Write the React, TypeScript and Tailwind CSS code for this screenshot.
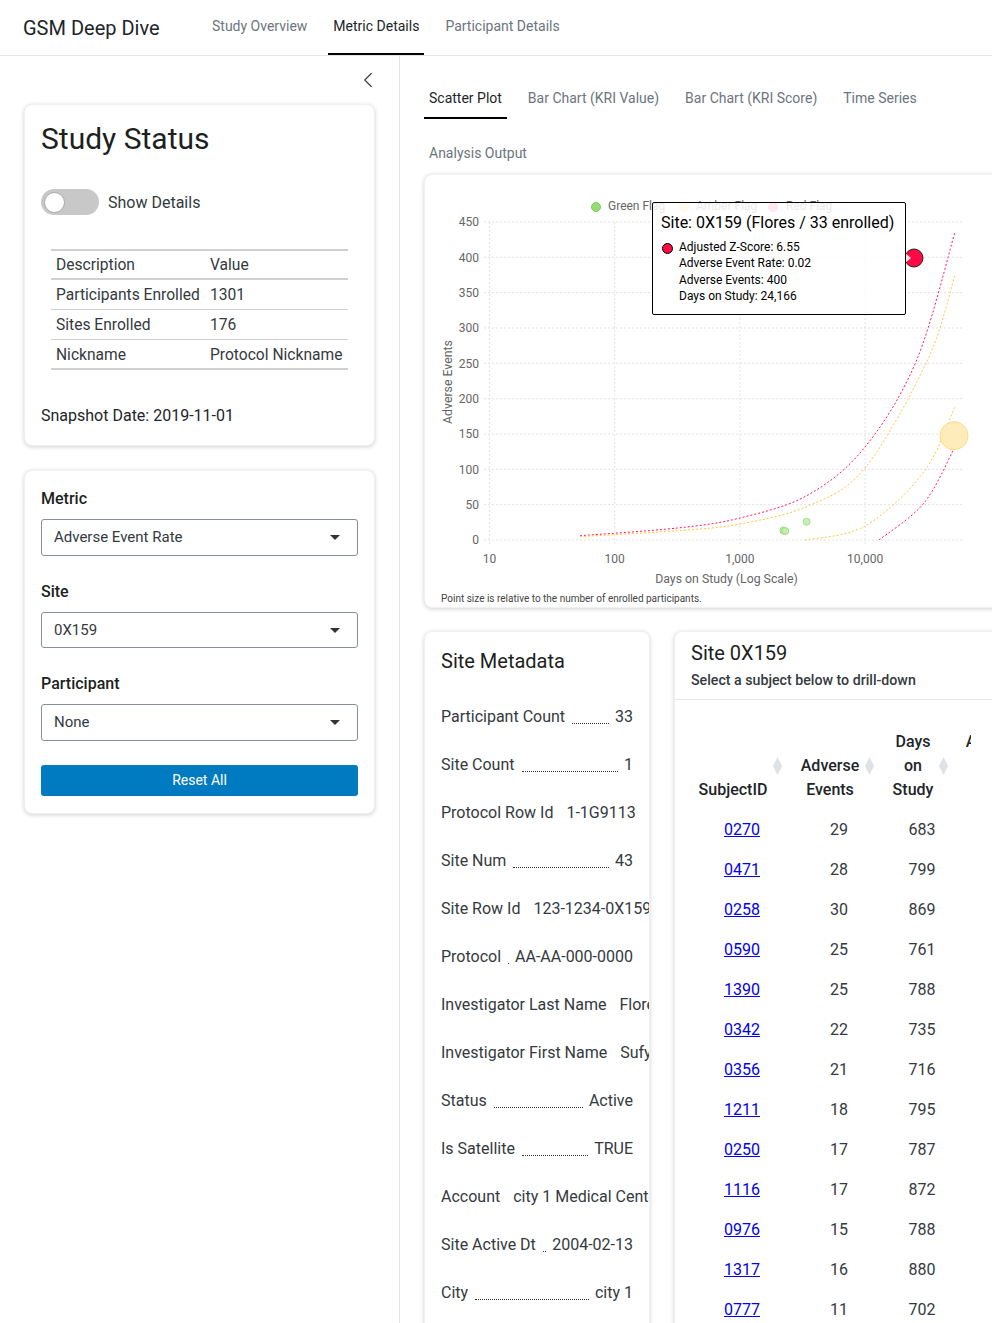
import { ChevronLeft } from "lucide-react";

const studyRows = [
  ["Participants Enrolled", "1301"],
  ["Sites Enrolled", "176"],
  ["Nickname", "Protocol Nickname"],
];

const metadata = [
  ["Participant Count", "33"],
  ["Site Count", "1"],
  ["Protocol Row Id", "1-1G9113"],
  ["Site Num", "43"],
  ["Site Row Id", "123-1234-0X159"],
  ["Protocol", "AA-AA-000-0000"],
  ["Investigator Last Name", "Flores"],
  ["Investigator First Name", "Sufyan"],
  ["Status", "Active"],
  ["Is Satellite", "TRUE"],
  ["Account", "city 1 Medical Center"],
  ["Site Active Dt", "2004-02-13"],
  ["City", "city 1"],
];

const subjects = [
  ["0270", "29", "683"],
  ["0471", "28", "799"],
  ["0258", "30", "869"],
  ["0590", "25", "761"],
  ["1390", "25", "788"],
  ["0342", "22", "735"],
  ["0356", "21", "716"],
  ["1211", "18", "795"],
  ["0250", "17", "787"],
  ["1116", "17", "872"],
  ["0976", "15", "788"],
  ["1317", "16", "880"],
  ["0777", "11", "702"],
];

const columns = [
  ["SubjectID", "right-[8.5px]", "pr-[18px]"],
  ["Adverse Events", "right-[14.5px]", "pr-[18px]"],
  ["Days on Study", "right-[8.5px]", "pr-[18px]"],
  ["Adverse Event Rate", "right-[8.5px]", "pr-[22px] pl-[4px]"],
];

const yTicks = [0, 50, 100, 150, 200, 250, 300, 350, 400, 450];
const xTicks = [
  [10, "10"],
  [100, "100"],
  [1000, "1,000"],
  [10000, "10,000"],
] as const;

const px = (days: number) => 489.5 + (Math.log10(days) - 1) * 125.2;
const py = (events: number) => 540 - events * 0.7067;

// funnel bounds, traced in page coordinates
const redUpper = [
  [580, 535.7], [677.6, 528], [740, 518], [808, 495], [865, 447], [916.7, 360], [955, 232],
];
const amberUpper = [
  [580, 536.7], [677.6, 530.7], [740, 524], [808, 506], [865, 468], [927.6, 360], [955, 275],
];
const amberLower = [
  [805, 540], [865, 526], [924, 471.7], [955, 406.7],
];
const redLower = [
  [879, 540], [924, 503], [955, 446.7],
];

function smooth(p: number[][]) {
  let d = `M${p[0][0]} ${p[0][1]}`;
  for (let i = 0; i < p.length - 1; i++) {
    const a = p[Math.max(i - 1, 0)];
    const b = p[i];
    const c = p[i + 1];
    const e = p[Math.min(i + 2, p.length - 1)];
    d += `C${b[0] + (c[0] - a[0]) / 6} ${b[1] + (c[1] - a[1]) / 6} ${c[0] - (e[0] - b[0]) / 6} ${c[1] - (e[1] - b[1]) / 6} ${c[0]} ${c[1]}`;
  }
  return d;
}

function ScatterChart() {
  return (
    <svg width="640" height="432" viewBox="425 175 640 432" className="block">
      {yTicks.map((t) => (
        <g key={t}>
          <line x1="484" x2="963" y1={py(t)} y2={py(t)} stroke="#e2e2e2" strokeDasharray="2 2" />
          <text x="479" y={py(t) + 4.2} textAnchor="end" fontSize="12" fill="#666">
            {t}
          </text>
        </g>
      ))}
      {xTicks.map(([v, label]) => (
        <g key={v}>
          <line x1={px(v)} x2={px(v)} y1="222" y2="545" stroke="#e2e2e2" strokeDasharray="2 2" />
          <text x={px(v)} y="562.5" textAnchor="middle" fontSize="12" fill="#666">
            {label}
          </text>
        </g>
      ))}
      <circle cx="596" cy="207" r="4.5" fill="#97dc74" stroke="#7cc95a" />
      <text x="608" y="210" fontSize="12" fill="#666">
        Green Flag
      </text>
      <circle cx="684" cy="207" r="4.5" fill="#ffdf8a" stroke="#ffd25e" />
      <text x="696" y="210" fontSize="12" fill="#666">
        Amber Flag
      </text>
      <circle cx="773" cy="207" r="4.5" fill="#ff6c90" stroke="#ff4a76" />
      <text x="786" y="210" fontSize="12" fill="#666">
        Red Flag
      </text>

      <path d={smooth(redUpper)} fill="none" stroke="#ff1a5e" strokeDasharray="2 2" />
      <path d={smooth(amberUpper)} fill="none" stroke="#ffc83d" strokeDasharray="2 2" />
      <path d={smooth(amberLower)} fill="none" stroke="#ffc83d" strokeDasharray="2 2" />
      <path d={smooth(redLower)} fill="none" stroke="#ff1a5e" strokeDasharray="2 2" />

      <circle cx="783.4" cy="530.5" r="3.5" fill="#c6ecb0" stroke="#9fdb7f" />
      <circle cx="785.2" cy="531" r="3.5" fill="#c6ecb0" fillOpacity="0.8" stroke="#9fdb7f" />
      <circle cx="806.6" cy="521.7" r="3.5" fill="#cdeeb8" stroke="#a8de8b" />
      <circle cx="954" cy="435.7" r="14" fill="#ffeab4" fillOpacity="0.9" stroke="#ffdb85" />
      <circle cx="914" cy="258" r="9" fill="#ff0a45" stroke="#222" />
      <path d="M904 252L911 258L904 264Z" fill="#fff" fillOpacity="0.88" />

      <text
        transform="translate(452 382) rotate(-90)"
        textAnchor="middle"
        fontSize="12.3"
        fill="#666"
      >
        Adverse Events
      </text>
      <text x="726.5" y="583" textAnchor="middle" fontSize="12.3" fill="#666">
        Days on Study (Log Scale)
      </text>
    </svg>
  );
}

function SelectBox({ label, value, h }: { label: string; value: string; h: string }) {
  return (
    <div>
      <div className="mb-[8px] pt-[1px] text-[16px] leading-[24px] font-medium text-[#1d1f21]">{label}</div>
      <div
        className={`flex items-center justify-between rounded-[3px] border border-[#868e96] pr-[17px] pl-[12px] text-[15px] text-[#343a40] ${h}`}
      >
        <span>{value}</span>
        <span className="h-0 w-0 border-x-[5px] border-t-[5px] border-x-transparent border-t-[#333]" />
      </div>
    </div>
  );
}

export default function App() {
  return (
    <div className="h-[1323px] w-[992px] overflow-hidden bg-white font-['Roboto',sans-serif] text-[#1d1f21]">
      <header className="flex h-[56px] border-b border-[#e5e5e5]">
        <div className="w-[207px] pt-[14px] pl-[23px] text-[20px] leading-[28px] text-[#212529]">GSM Deep Dive</div>
        <nav className="flex gap-[16px] text-[14px]">
          <div className="px-[5px] pt-[16px] text-[#6c757d]">Study Overview</div>
          <div className="border-b-2 border-black px-[5px] pt-[16px] text-[#212529]">Metric Details</div>
          <div className="px-[5px] pt-[16px] text-[#6c757d]">Participant Details</div>
        </nav>
      </header>

      <div className="flex h-[1267px]">
        <aside className="w-[400px] shrink-0 border-r border-[#e5e5e5] px-[24px]">
          <div className="flex h-[48px] items-center justify-end">
            <ChevronLeft size={26} strokeWidth={1} className="mr-[-6px] text-[#343a40]" />
          </div>

          <section className="h-[342px] rounded-[8px] border border-[#f0f0f0] bg-white px-[16px] pt-[14px] shadow-[0_1px_4px_rgba(0,0,0,0.18)]">
            <h1 className="text-[30px] leading-[40px] font-normal">Study Status</h1>
            <div className="mt-[30px] flex items-center gap-[9px]">
              <div className="flex h-[26px] w-[58px] items-center rounded-full bg-[#c8c8c8] pl-[3px]">
                <div className="h-[21px] w-[21px] rounded-full border border-[#a8a8a8] bg-white" />
              </div>
              <span className="mt-[1px] text-[16px] text-[#343a40]">Show Details</span>
            </div>
            <table className="mt-[34px] ml-[10px] w-[297px] border-collapse text-[15.6px] text-[#343a40]">
              <tbody>
                <tr className="h-[29px] border-y-2 border-[#d0d0d0]">
                  <td className="w-[154px] pt-[3px] pl-[5px]">Description</td>
                  <td className="pt-[3px] pl-[5px]">Value</td>
                </tr>
                {studyRows.map(([k, v], i) => (
                  <tr
                    key={k}
                    className={
                      i === 2 ? "h-[30px] border-b-2 border-[#d0d0d0]" : "h-[30px] border-b border-[#d0d0d0]"
                    }
                  >
                    <td className="whitespace-nowrap pt-[3px] pl-[5px]">{k}</td>
                    <td className="whitespace-nowrap pt-[3px] pl-[5px]">{v}</td>
                  </tr>
                ))}
              </tbody>
            </table>
            <div className="mt-[34px] text-[16px] leading-[24px] text-[#212529]">Snapshot Date: 2019-11-01</div>
          </section>

          <section className="mt-[24px] h-[344px] rounded-[8px] border border-[#f0f0f0] bg-white px-[16px] pt-[15px] shadow-[0_1px_4px_rgba(0,0,0,0.18)]">
            <div className="flex flex-col gap-[23px]">
              <SelectBox label="Metric" value="Adverse Event Rate" h="h-[37px]" />
              <SelectBox label="Site" value="0X159" h="h-[36px]" />
              <SelectBox label="Participant" value="None" h="h-[37px]" />
            </div>
            <button className="mt-[24px] h-[31px] w-full rounded-[3px] bg-[#007bc2] text-[14px] font-normal text-white">
              Reset All
            </button>
          </section>
        </aside>

        <main className="min-w-0 flex-1 pl-[24px]">
          <div className="flex h-[63px] gap-[16px] pt-[25px] text-[14px]">
            <div className="h-[38px] border-b-2 border-black px-[5px] pt-[7px] text-[#212529]">Scatter Plot</div>
            <div className="px-[5px] pt-[7px] text-[#6c757d]">Bar Chart (KRI Value)</div>
            <div className="px-[5px] pt-[7px] text-[#6c757d]">Bar Chart (KRI Score)</div>
            <div className="px-[5px] pt-[7px] text-[#6c757d]">Time Series</div>
          </div>
          <div className="pt-[22px] pl-[5px] text-[14px] leading-[24px] text-[#6c757d]">Analysis Output</div>

          <section className="relative mt-[9px] h-[434px] w-[640px] overflow-hidden rounded-[8px] border border-[#f0f0f0] bg-white shadow-[0_1px_4px_rgba(0,0,0,0.18)]">
            <ScatterChart />
            <div className="absolute top-[418px] left-[16px] text-[10px] leading-[12px] text-[#444]">
              Point size is relative to the number of enrolled participants.
            </div>
            <div className="absolute top-[27px] left-[227px] h-[113px] w-[254px] rounded-[2px] border border-black bg-white/[0.85] pt-[10px] pl-[8px] text-black">
              <div className="text-[16px] leading-[20px]">Site: 0X159 (Flores / 33 enrolled)</div>
              <div className="mt-[6px] flex">
                <span className="mt-[4px] ml-[1px] h-[11px] w-[11px] rounded-full border border-black bg-[#ff0a45]" />
                <div className="ml-[6px] text-[12px] leading-[16.3px]">
                  <div>Adjusted Z-Score: 6.55</div>
                  <div>Adverse Event Rate: 0.02</div>
                  <div>Adverse Events: 400</div>
                  <div>Days on Study: 24,166</div>
                </div>
              </div>
            </div>
          </section>

          <div className="mt-[23px] flex gap-[24px]">
            <section className="h-[800px] w-[226px] shrink-0 overflow-hidden rounded-[8px] border border-[#f0f0f0] bg-white pt-[16px] pl-[16px] shadow-[0_1px_4px_rgba(0,0,0,0.18)]">
              <h2 className="text-[20px] leading-[26px] font-normal">Site Metadata</h2>
              <div className="mt-[31px] flex w-[192px] flex-col gap-[24px] text-[16px] leading-[24px] text-[#343a40]">
                {metadata.map(([k, v]) => (
                  <div key={k} className="flex">
                    <span className="shrink-0 whitespace-nowrap">{k}</span>
                    <span className="mr-[6px] mb-[5px] ml-[7px] min-w-0 flex-1 border-b border-dotted border-[#333]" />
                    <span className="shrink-0 whitespace-nowrap">{v}</span>
                  </div>
                ))}
              </div>
            </section>

            <section className="h-[800px] w-[400px] shrink-0 rounded-[8px] border border-[#f0f0f0] bg-white shadow-[0_1px_4px_rgba(0,0,0,0.18)]">
              <div className="h-[68px] border-b border-[#e5e5e5] pt-[8px] pl-[16px]">
                <h2 className="text-[20px] leading-[26px] font-normal">Site 0X159</h2>
                <div className="mt-[4px] text-[14.2px] leading-[20px] font-medium text-[#343a40]">
                  Select a subject below to drill-down
                </div>
              </div>
              <div className="ml-[19px] w-[277px] overflow-hidden pt-[30px]">
                <table className="w-[358px] table-fixed border-collapse text-[16px] text-[#343a40]">
                  <colgroup>
                    <col className="w-[96px]" />
                    <col className="w-[98px]" />
                    <col className="w-[68px]" />
                    <col className="w-[96px]" />
                  </colgroup>
                  <thead>
                    <tr>
                      {columns.map(([label, pos, pad]) => (
                        <th
                          key={label}
                          className={`relative pb-[8px] align-bottom text-[16px] leading-[24px] font-medium text-[#212529] ${pad}`}
                        >
                          {label}
                          <svg
                            width="9"
                            height="18"
                            viewBox="0 0 9 18"
                            className={`absolute top-[27px] ${pos}`}
                          >
                            <path d="M4.5 0L9 9L4.5 18L0 9Z" fill="#dee2e6" />
                          </svg>
                        </th>
                      ))}
                    </tr>
                  </thead>
                  <tbody>
                    {subjects.map(([id, ae, days]) => (
                      <tr key={id} className="h-[40px] text-center">
                        <td>
                          <a href="#" className="text-[#0000ee] underline">
                            {id}
                          </a>
                        </td>
                        <td>{ae}</td>
                        <td>{days}</td>
                        <td />
                      </tr>
                    ))}
                  </tbody>
                </table>
              </div>
            </section>
          </div>
        </main>
      </div>
    </div>
  );
}
